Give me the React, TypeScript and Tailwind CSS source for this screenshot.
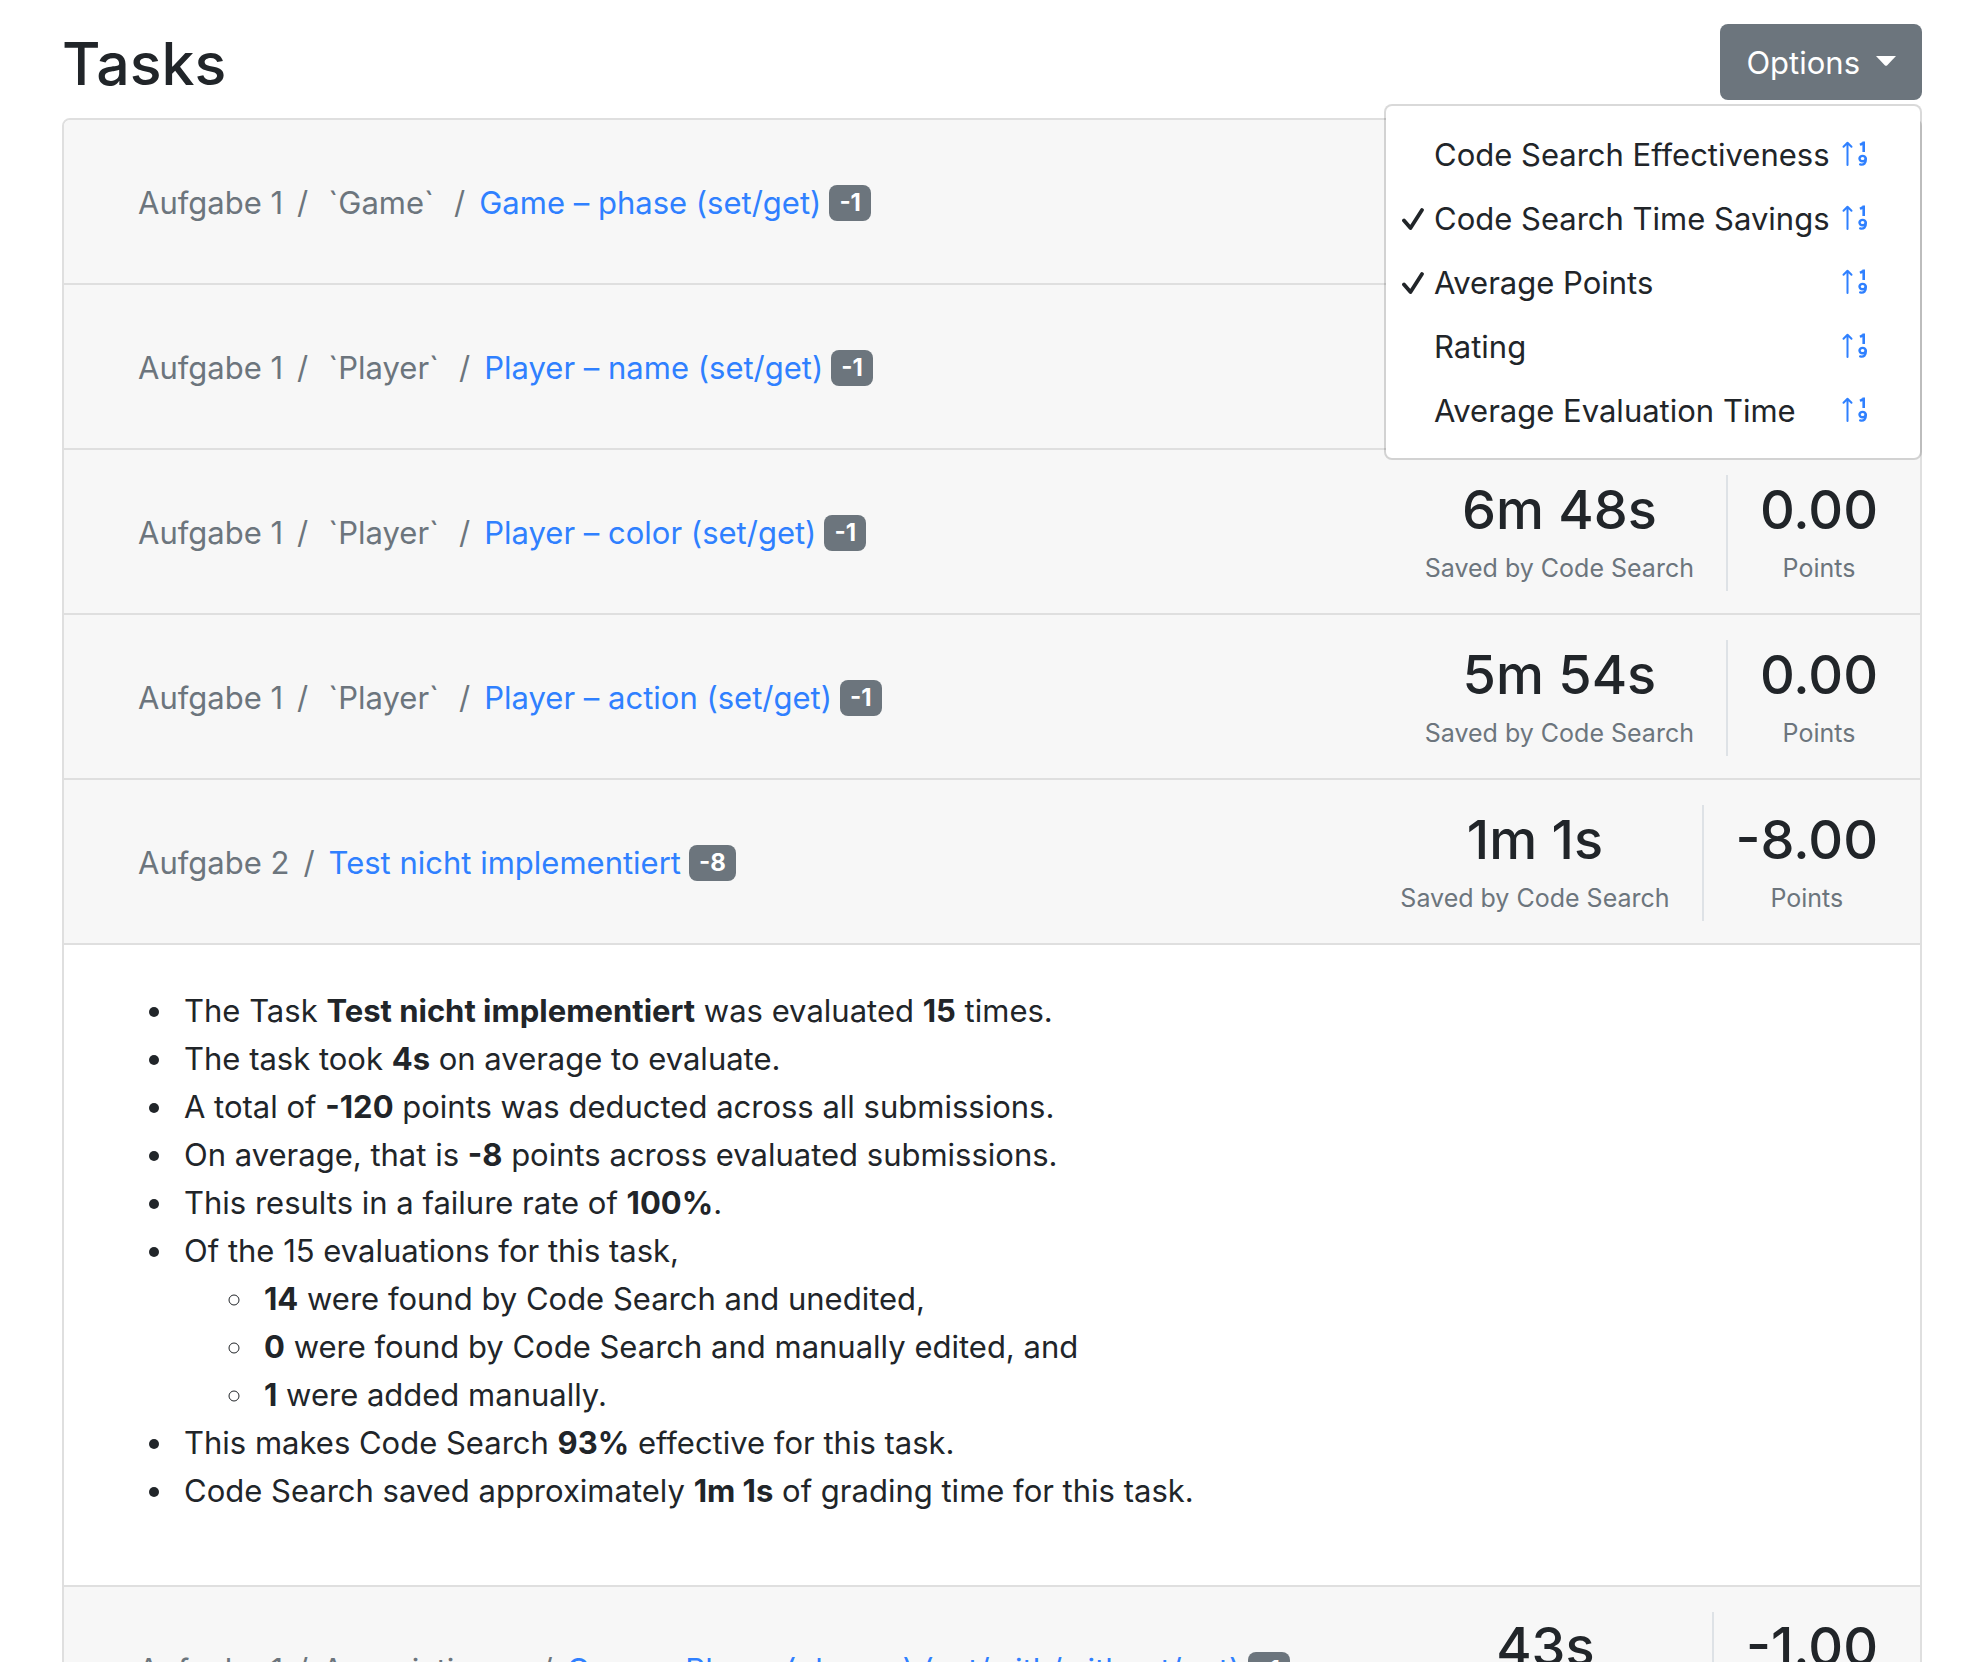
import { Fragment, useState } from "react";

type Task = {
  path: string[];
  name: string;
  badge: string;
  saved: string;
  points: string;
  open?: boolean;
};

const TASKS: Task[] = [
  { path: ["Aufgabe 1", "`Game`"], name: "Game – phase (set/get)", badge: "-1", saved: "7m 2s", points: "0.00" },
  { path: ["Aufgabe 1", "`Player`"], name: "Player – name (set/get)", badge: "-1", saved: "6m 55s", points: "0.00" },
  { path: ["Aufgabe 1", "`Player`"], name: "Player – color (set/get)", badge: "-1", saved: "6m 48s", points: "0.00" },
  { path: ["Aufgabe 1", "`Player`"], name: "Player – action (set/get)", badge: "-1", saved: "5m 54s", points: "0.00" },
  { path: ["Aufgabe 2"], name: "Test nicht implementiert", badge: "-8", saved: "1m 1s", points: "-8.00", open: true },
  { path: ["Aufgabe 1", "Assoziationen"], name: "Game – Player (players) (set/with/without/get)", badge: "-1", saved: "43s", points: "-1.00" },
];

const OPTIONS = [
  { label: "Code Search Effectiveness", checked: false },
  { label: "Code Search Time Savings", checked: true },
  { label: "Average Points", checked: true },
  { label: "Rating", checked: false },
  { label: "Average Evaluation Time", checked: false },
];

function CheckIcon() {
  return (
    <svg viewBox="0 0 24 28" className="h-7 w-6" fill="none" stroke="#212529" strokeWidth="3.8" strokeLinecap="round" strokeLinejoin="round" aria-hidden="true">
      <path d="M4 15.5 10.5 23 22 5" />
    </svg>
  );
}

function SortNumericUpIcon() {
  return (
    <svg viewBox="0 0 28 28" className="h-7 w-7 text-[#2f80ff]" fill="none" stroke="currentColor" strokeLinecap="round" strokeLinejoin="round" aria-hidden="true">
      <path strokeWidth="2" d="M5.5 25V3M1.5 6.8l4-4 4 4" />
      <path strokeWidth="2.6" strokeLinecap="butt" strokeLinejoin="miter" d="M21.7 12V1.5M22 2.6 18 4.8" />
      <ellipse strokeWidth="2.4" cx="20.6" cy="18.6" rx="3.1" ry="2.7" />
      <path strokeWidth="2.4" d="M23.8 18.8c.2 4.2-2 6.6-5.6 5.6" />
    </svg>
  );
}

function OptionsMenu() {
  const [options, setOptions] = useState(OPTIONS);
  const toggle = (label: string) =>
    setOptions(options.map((o) => (o.label === label ? { ...o, checked: !o.checked } : o)));
  return (
    <div className="relative">
      <button type="button" aria-expanded="true" className="flex h-19 items-center gap-4 rounded-lg bg-[#6c757d] px-[26px] pt-0.5 text-[31px] text-white">
        Options
        <svg viewBox="0 0 20 10" className="mb-1 h-[10px] w-5" fill="currentColor" aria-hidden="true">
          <path d="M0 0H20L11 9.4Q10 10 9 9.4Z" />
        </svg>
      </button>
      <ul className="absolute top-20 right-0 z-10 w-[538px] rounded-lg border-2 border-black/15 bg-white bg-clip-padding py-4">
        {options.map((o) => (
          <li key={o.label} className="flex h-16 items-center pr-[50px] pl-3.5">
            <button type="button" role="menuitemcheckbox" aria-checked={o.checked} onClick={() => toggle(o.label)} className="flex grow items-center pt-0.5 text-left whitespace-nowrap">
              <span className="w-[34px]">{o.checked && <CheckIcon />}</span>
              {o.label}
            </button>
            <button type="button" aria-label={`Sort by ${o.label}`}>
              <SortNumericUpIcon />
            </button>
          </li>
        ))}
      </ul>
    </div>
  );
}

function Stat({ value, label }: { value: string; label: string }) {
  return (
    <div className="px-8 text-center">
      <div className="text-[54px] leading-[70px] font-medium">{value}</div>
      <div className="text-[25px] leading-[46px] text-[#6c757d]">{label}</div>
    </div>
  );
}

function TaskHeader({ task }: { task: Task }) {
  return (
    <div className="flex h-[165px] items-center border-b-2 border-[#dfdfdf] bg-[#f7f7f7] pt-0.5 pr-2.5 pl-[74px]">
      <nav className="flex grow items-center whitespace-pre text-[#6c757d]">
        {task.path.map((p) => (
          <Fragment key={p}>
            <span className={p.startsWith("`") ? "px-1.5" : ""}>{p}</span>
            <span className="px-3.5">/</span>
          </Fragment>
        ))}
        <a href="#task" className="text-[#2f80ff]">{task.name}</a>
        <span className="ml-2 rounded-lg bg-[#6c757d] px-2.5 text-2xl leading-9 font-bold text-white">{task.badge}</span>
      </nav>
      <div className="flex divide-x-2 divide-[#dee2e6]">
        <Stat value={task.saved} label="Saved by Code Search" />
        <Stat value={task.points} label="Points" />
      </div>
    </div>
  );
}

function TaskDetails() {
  return (
    <div className="border-b-2 border-[#dfdfdf] px-10 pt-[42px] pb-[70px]">
      <ul className="list-disc pl-[72px] *:pl-2">
        <li>The Task <b>Test nicht implementiert</b> was evaluated <b>15</b> times.</li>
        <li>The task took <b>4s</b> on average to evaluate.</li>
        <li>A total of <b>-120</b> points was deducted across all submissions.</li>
        <li>On average, that is <b>-8</b> points across evaluated submissions.</li>
        <li>This results in a failure rate of <b>100%</b>.</li>
        <li>
          Of the 15 evaluations for this task,
          <ul className="list-[circle] pl-[72px] *:pl-2">
            <li><b>14</b> were found by Code Search and unedited,</li>
            <li><b>0</b> were found by Code Search and manually edited, and</li>
            <li><b>1</b> were added manually.</li>
          </ul>
        </li>
        <li>This makes Code Search <b>93%</b> effective for this task.</li>
        <li>Code Search saved approximately <b>1m 1s</b> of grading time for this task.</li>
      </ul>
    </div>
  );
}

export default function App() {
  return (
    <div className="h-screen overflow-hidden bg-white px-[62px] pt-6 font-[Inter,sans-serif] text-[31px] leading-[48px] text-[#212529]">
      <header className="flex items-start justify-between pb-4">
        <h1 className="pt-0.5 text-[59px] leading-[76px] font-medium">Tasks</h1>
        <OptionsMenu />
      </header>
      <main className="overflow-hidden rounded-t-lg border-2 border-[#dfdfdf]">
        {TASKS.map((t) => (
          <Fragment key={t.path.join() + t.name}>
            <TaskHeader task={t} />
            {t.open && <TaskDetails />}
          </Fragment>
        ))}
      </main>
    </div>
  );
}
